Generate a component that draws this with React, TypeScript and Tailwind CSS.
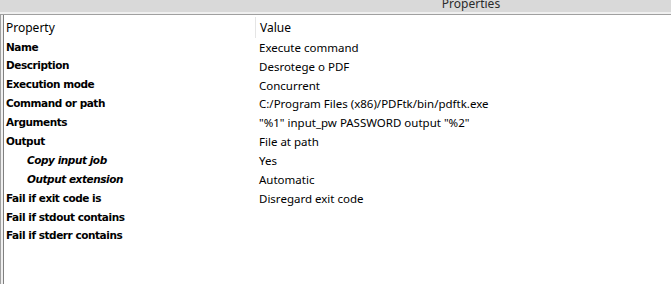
import React from 'react'

type Row = { label: string; value?: string; sub?: boolean }

const rows: Row[] = [
  { label: 'Name', value: 'Execute command' },
  { label: 'Description', value: 'Desrotege o PDF' },
  { label: 'Execution mode', value: 'Concurrent' },
  { label: 'Command or path', value: 'C:/Program Files (x86)/PDFtk/bin/pdftk.exe' },
  { label: 'Arguments', value: '"%1" input_pw PASSWORD output "%2"' },
  { label: 'Output', value: 'File at path' },
  { label: 'Copy input job', value: 'Yes', sub: true },
  { label: 'Output extension', value: 'Automatic', sub: true },
  { label: 'Fail if exit code is', value: 'Disregard exit code' },
  { label: 'Fail if stdout contains' },
  { label: 'Fail if stderr contains' },
]

const ui = "font-['Noto_Sans','Open_Sans',sans-serif]"
const bold = "font-['DejaVu_Sans','Noto_Sans',sans-serif]"

export default function App() {
  return (
    <div className={`w-[671px] h-[284px] overflow-hidden bg-white flex flex-col ${ui}`}>
      {/* title strip, cut off at the top */}
      <div className="h-[11px] shrink-0 bg-[#d9d9d9] flex justify-center pl-[271px] overflow-hidden">
        <span className="text-[12px] leading-[12px] -mt-[2px] text-[#2b2b2b]">Properties</span>
      </div>
      <div className="h-[1px] bg-[#d9d9d9] shrink-0" />
      <div className="h-[2px] bg-[#f0f0f0] shrink-0" />
      <div className="h-[1px] bg-[#a0a0a0] shrink-0" />

      <div className="flex-1 flex min-h-0">
        <div className="w-[1px] bg-[#a0a0a0] shrink-0" />
        <div className="w-[2px] bg-[#f0f0f0] shrink-0" />
        <div className="w-[1px] bg-[#808080] shrink-0" />

        <div className="flex-1 flex flex-col pt-[1px]">
          <div className="h-[22px] flex items-center text-[12px] text-black pt-[1px]">
            <div className="w-[252px] pl-[2px] border-r border-[#e5e5e5] h-full flex items-center">Property</div>
            <div className="pl-[4px]">Value</div>
          </div>
          {rows.map((r) => (
            <div key={r.label} className="h-[18.9px] flex items-center text-black">
              <div
                className={`w-[253px] ${bold} font-bold text-[10.5px] tracking-[-0.45px] ${r.sub ? 'pl-[23px] italic' : 'pl-[2px]'}`}
              >
                {r.label}
              </div>
              <div className="pl-[2px] text-[11.5px]">{r.value}</div>
            </div>
          ))}
        </div>
      </div>
    </div>
  )
}
